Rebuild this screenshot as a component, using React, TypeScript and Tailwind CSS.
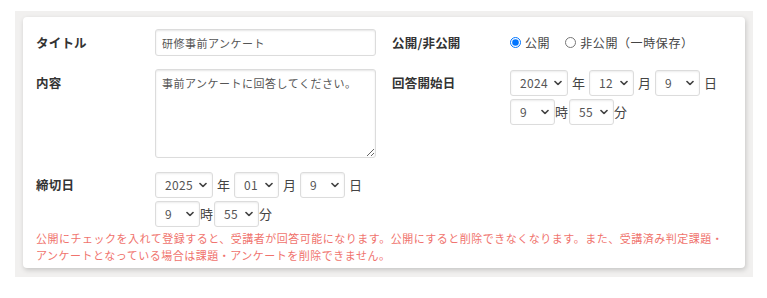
import type { ReactNode } from 'react';

const font = "font-['Noto_Sans_CJK_JP','Noto_Sans',sans-serif]";

function Chevron() {
  return (
    <svg
      className="pointer-events-none absolute right-[6px] top-1/2 -translate-y-1/2"
      width="8"
      height="5"
      viewBox="0 0 8 5"
      fill="none"
    >
      <polyline points="1,1 4,4 7,1" stroke="#444" strokeWidth="1.7" strokeLinecap="round" strokeLinejoin="round" />
    </svg>
  );
}

function Select({ value, options, wide }: { value: string; options: string[]; wide?: boolean }) {
  return (
    <div className="relative shrink-0">
      <select
        defaultValue={value}
        className={`h-[26px] appearance-none rounded-[3px] border border-[#dcdcdc] bg-white pl-[9px] text-[12px] tracking-[0.3px] text-[#555] shadow-[inset_0_1px_2px_rgba(0,0,0,0.08)] outline-none ${
          wide ? 'w-[58px]' : 'w-[45px]'
        }`}
      >
        {options.map((o) => (
          <option key={o}>{o}</option>
        ))}
      </select>
      <Chevron />
    </div>
  );
}

function Unit({ children, spaced }: { children: ReactNode; spaced?: boolean }) {
  return (
    <span
      className={`text-[13px] leading-[26px] text-[#444] ${spaced ? 'mx-1 w-[13px]' : 'w-[14px]'}`}
    >
      {children}
    </span>
  );
}

function DateTime({ year, month, day }: { year: string; month: string; day: string }) {
  return (
    <div className="flex flex-col gap-[2px]">
      <div className="flex items-center">
        <Select value={year} options={['2024', '2025', '2026']} wide />
        <Unit spaced>年</Unit>
        <Select value={month} options={['01', '12']} />
        <Unit spaced>月</Unit>
        <Select value={day} options={['9']} />
        <Unit spaced>日</Unit>
      </div>
      <div className="flex items-center">
        <Select value="9" options={['9']} />
        <Unit>時</Unit>
        <Select value="55" options={['55']} />
        <Unit>分</Unit>
      </div>
    </div>
  );
}

function Label({ children }: { children: ReactNode }) {
  return <div className="text-[12.5px] font-bold leading-[27px] tracking-[0.2px] text-[#333]">{children}</div>;
}

export default function App() {
  return (
    <main className={`min-h-[298px] bg-white pl-[15px] pt-[11px] ${font}`}>
      <div className="h-[266px] w-[738px] bg-[#f1f0ef] px-[8px] pt-[6px]">
        <section className="h-[251px] rounded-[4px] bg-white pl-[13px] pt-[12px] shadow-[1px_2px_5px_rgba(0,0,0,0.18)]">
          <div className="grid grid-cols-[119px_237px_118px_1fr] items-start gap-y-[13px]">
            <Label>タイトル</Label>
            <input
              defaultValue="研修事前アンケート"
              className="h-[27px] w-[221px] rounded-[3px] border border-[#dcdcdc] px-[6px] text-[11px] tracking-[0.5px] text-[#555] shadow-[inset_0_1px_2px_rgba(0,0,0,0.1)] outline-none"
            />
            <Label>公開/非公開</Label>
            <div className="flex h-[27px] items-center text-[12px] tracking-[0.6px] text-[#444]">
              <label className="flex items-center gap-[4px]">
                <input type="radio" name="pub" defaultChecked className="m-0 h-[11px] w-[11px]" />
                公開
              </label>
              <label className="ml-[15px] flex items-center gap-[4px]">
                <input type="radio" name="pub" className="m-0 h-[11px] w-[11px]" />
                非公開（一時保存）
              </label>
            </div>

            <Label>内容</Label>
            <textarea
              defaultValue="事前アンケートに回答してください。"
              className="h-[89px] w-[221px] rounded-[3px] border border-[#dcdcdc] px-[6px] pt-[4px] text-[11px] leading-[18px] tracking-[0.5px] text-[#555] shadow-[inset_0_1px_2px_rgba(0,0,0,0.1)] outline-none"
            />
            <Label>回答開始日</Label>
            <DateTime year="2024" month="12" day="9" />

            <Label>締切日</Label>
            <DateTime year="2025" month="01" day="9" />
          </div>
          <p className="mt-[3px] pr-[16px] text-[11px] leading-[16.5px] tracking-[0.5px] text-[#f0736d]">
            公開にチェックを入れて登録すると、受講者が回答可能になります。公開にすると削除できなくなります。また、受講済み判定課題・アンケートとなっている場合は課題・アンケートを削除できません。
          </p>
        </section>
      </div>
    </main>
  );
}
